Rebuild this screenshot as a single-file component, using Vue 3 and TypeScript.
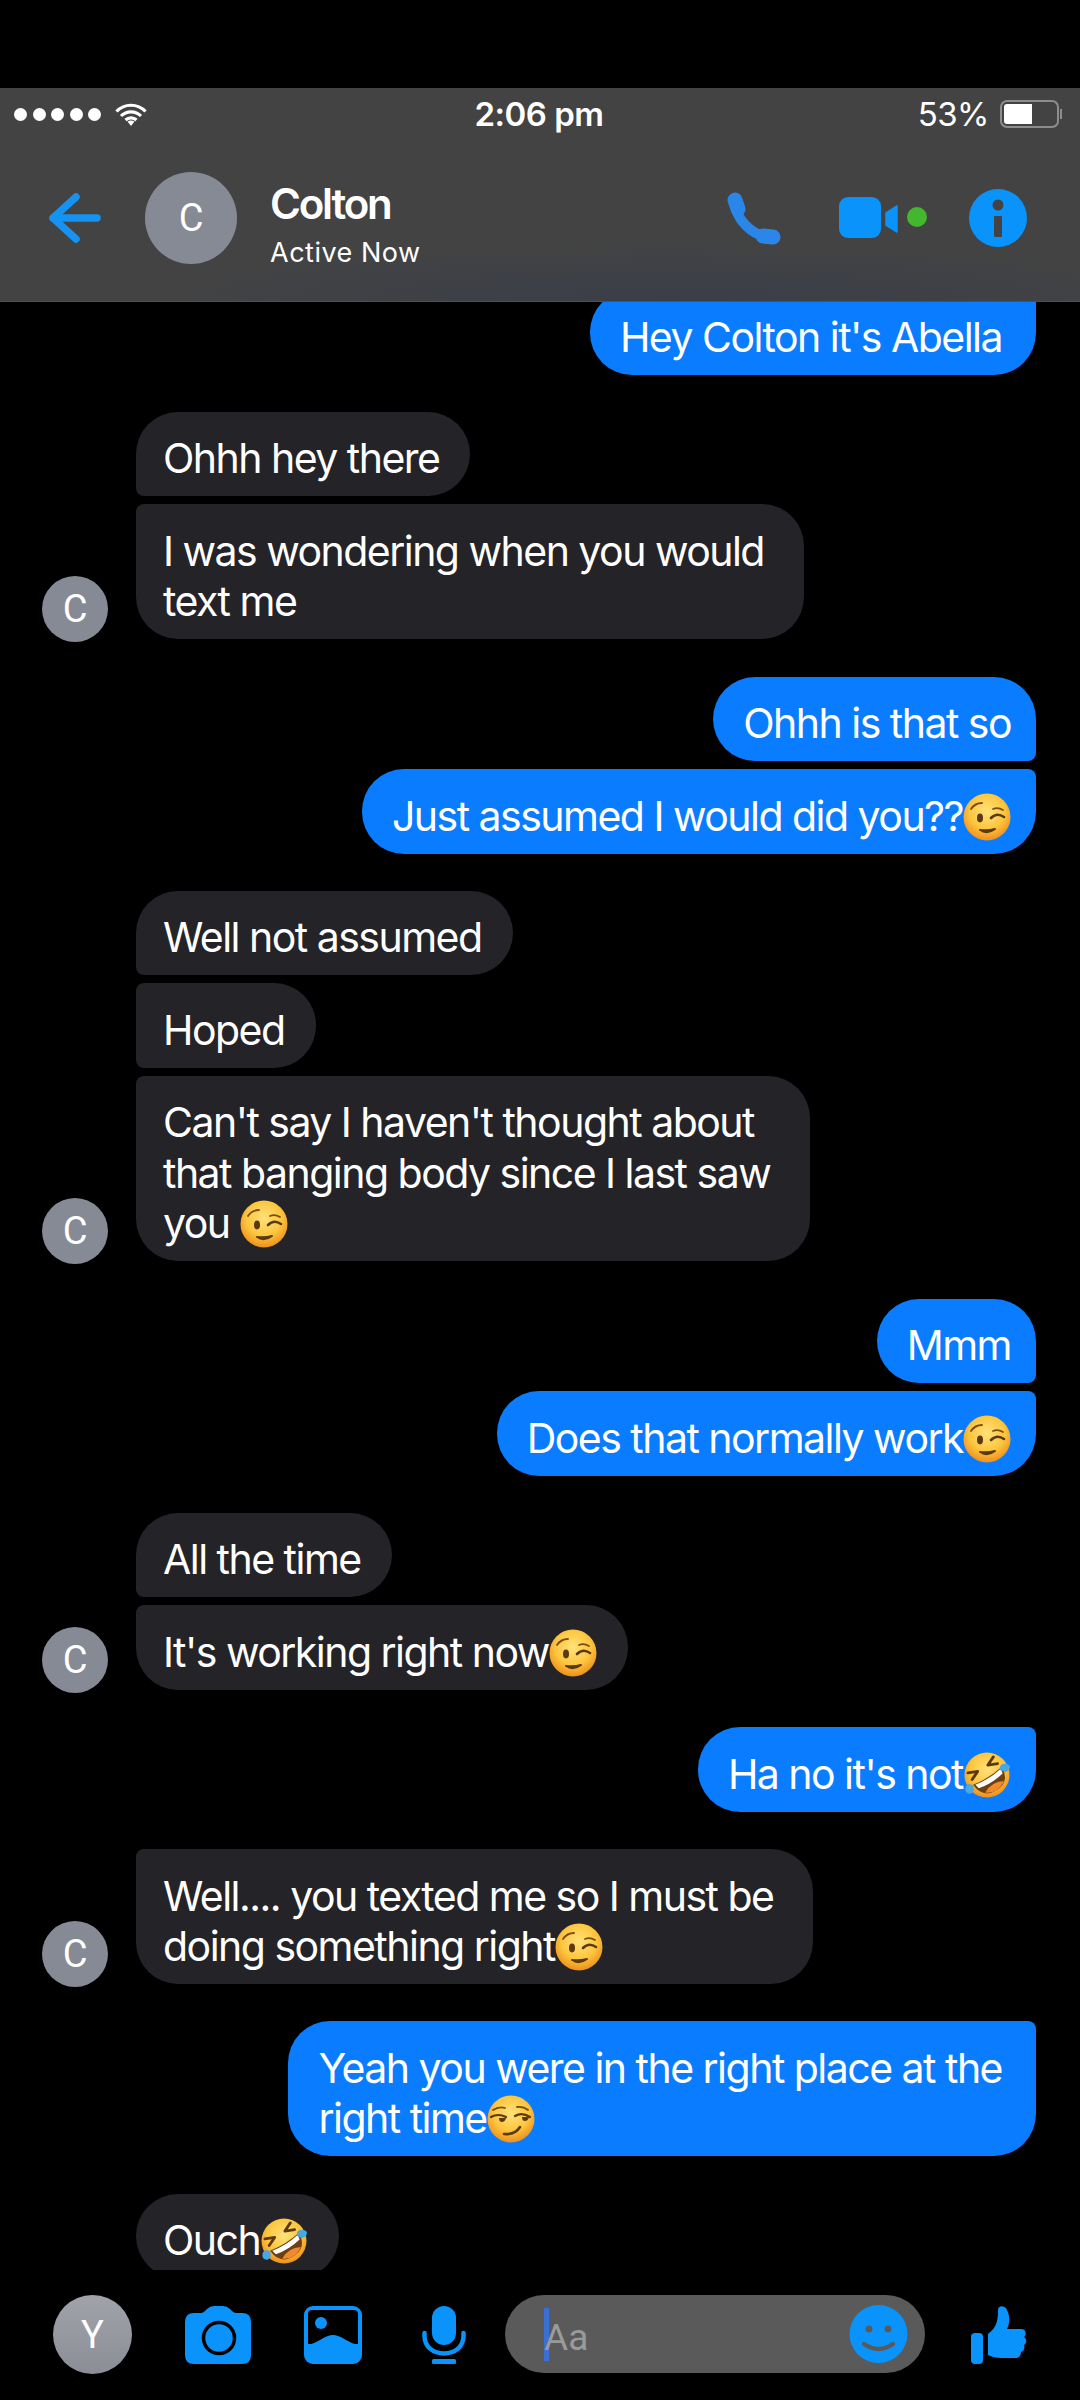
<script setup lang="ts">
type Piece = string | { emoji: 'wink' | 'rofl' | 'smirk' }
interface Bubble {
  lines: Piece[][]
  shape: 'top' | 'middle' | 'bottom' | 'single'
}
interface Group {
  side: 'in' | 'out'
  avatar?: boolean
  bubbles: Bubble[]
}

const wink = { emoji: 'wink' as const }
const rofl = { emoji: 'rofl' as const }
const smirk = { emoji: 'smirk' as const }

const groups: Group[] = [
  { side: 'out', bubbles: [{ lines: [["Hey Colton it's Abella"]], shape: 'single' }] },
  {
    side: 'in',
    avatar: true,
    bubbles: [
      { lines: [['Ohhh hey there']], shape: 'top' },
      { lines: [['I was wondering when you would'], ['text me']], shape: 'bottom' },
    ],
  },
  {
    side: 'out',
    bubbles: [
      { lines: [['Ohhh is that so']], shape: 'top' },
      { lines: [['Just assumed I would did you??', wink]], shape: 'bottom' },
    ],
  },
  {
    side: 'in',
    avatar: true,
    bubbles: [
      { lines: [['Well not assumed']], shape: 'top' },
      { lines: [['Hoped']], shape: 'middle' },
      {
        lines: [["Can't say I haven't thought about"], ['that banging body since I last saw'], ['you ', wink]],
        shape: 'bottom',
      },
    ],
  },
  {
    side: 'out',
    bubbles: [
      { lines: [['Mmm']], shape: 'top' },
      { lines: [['Does that normally work', wink]], shape: 'bottom' },
    ],
  },
  {
    side: 'in',
    avatar: true,
    bubbles: [
      { lines: [['All the time']], shape: 'top' },
      { lines: [["It's working right now", wink]], shape: 'bottom' },
    ],
  },
  { side: 'out', bubbles: [{ lines: [["Ha no it's not", rofl]], shape: 'single' }] },
  {
    side: 'in',
    avatar: true,
    bubbles: [{ lines: [['Well.... you texted me so I must be'], ['doing something right', wink]], shape: 'bottom' }],
  },
  {
    side: 'out',
    bubbles: [{ lines: [['Yeah you were in the right place at the'], ['right time', smirk]], shape: 'single' }],
  },
  { side: 'in', bubbles: [{ lines: [['Ouch', rofl]], shape: 'single' }] },
]
</script>

<template>
  <div class="screen">
    <svg class="defs" width="0" height="0" aria-hidden="true">
      <defs>
        <radialGradient id="face" cx="50%" cy="38%" r="62%">
          <stop offset="0%" stop-color="#ffe27a" />
          <stop offset="60%" stop-color="#fdc63f" />
          <stop offset="100%" stop-color="#ee8f1c" />
        </radialGradient>
        <symbol id="wink" viewBox="0 0 48 48">
          <circle cx="24" cy="24" r="23.500" fill="url(#face)" />
          <ellipse cx="17" cy="25" rx="3" ry="4.400" fill="#5b3a12" />
          <path d="M8 16q4-6 11-6" fill="none" stroke="#7a4d12" stroke-width="1.800" stroke-linecap="round" />
          <path d="M28 25q6-6 13-1" fill="none" stroke="#5b3a12" stroke-width="2.600" stroke-linecap="round" />
          <path d="M30 16q5-2 10 1" fill="none" stroke="#7a4d12" stroke-width="1.800" stroke-linecap="round" />
          <path d="M17 37q7 5 15-1q-7 2-15 1z" fill="#5b3a12" stroke="#5b3a12" stroke-width="2" stroke-linejoin="round" />
        </symbol>
        <symbol id="smirk" viewBox="0 0 48 48">
          <circle cx="24" cy="24" r="23.500" fill="url(#face)" />
          <path d="M4 22q7-4 15 0M28 21q7-4 15 1" fill="none" stroke="#5b3a12" stroke-width="2.200" stroke-linecap="round" />
          <path d="M12 23h7q-1 4-4 4t-3-4zM35 22h7q-1 4-4 4t-3-4z" fill="#5b3a12" />
          <path d="M6 15q6-4 12-2M30 12q6-1 11 3" fill="none" stroke="#7a4d12" stroke-width="1.800" stroke-linecap="round" />
          <path d="M17 39q11 1 16-7" fill="none" stroke="#5b3a12" stroke-width="2.600" stroke-linecap="round" />
        </symbol>
        <symbol id="rofl" viewBox="0 0 48 48">
          <circle cx="24" cy="24" r="22.500" fill="url(#face)" />
          <g transform="rotate(-32 24 24)">
            <path d="M7 25q17 3 34 0q-1 17-17 17T7 25z" fill="#6e3f10" />
            <path d="M9 26q15 3 30 0l-1 5q-14 3-28 0z" fill="#fff" />
            <path d="M13 38q11-6 22 0q-5 4-11 4t-11-4z" fill="#f08a2c" />
            <path d="M9 12l9 4l-9 4M39 12l-9 4l9 4" fill="none" stroke="#5b3a12" stroke-width="2.800" stroke-linecap="round" stroke-linejoin="round" />
          </g>
          <path d="M3 41q-2-5 2-8l5 1q2 5-1 8q-3 2-6-1z" fill="#4aa8e0" />
          <path d="M47 15q0 5-5 6l-5-2q-1-5 3-6q4-1 7 2z" fill="#4aa8e0" />
        </symbol>
      </defs>
    </svg>

    <header class="chat-header">
      <div class="status-bar">
        <div class="signal">
          <i v-for="n in 5" :key="n"></i>
          <svg class="wifi" viewBox="0 0 32 23" width="32" height="23">
            <path d="M1.500 8.500a20 20 0 0 1 29 0M6 13a14 14 0 0 1 20 0M10.500 17a8 8 0 0 1 11 0" fill="none" stroke="#fff" stroke-width="3.200" />
            <path d="M12.500 18.500q3.500-2 7 0L16 23z" fill="#fff" />
          </svg>
        </div>
        <div class="clock">2:06 pm</div>
        <div class="power">
          <span>53%</span>
          <div class="battery"><div class="battery-fill"></div></div>
          <div class="battery-nub"></div>
        </div>
      </div>
      <div class="nav-row">
        <svg class="back" viewBox="0 0 53 50" width="53" height="50">
          <path d="M28 4L5 25l23 21M5 25h44" fill="none" stroke="#1693f0" stroke-width="7.500" stroke-linecap="round" stroke-linejoin="round" />
        </svg>
        <div class="avatar avatar-large">C</div>
        <div class="contact">
          <div class="contact-name">Colton</div>
          <div class="contact-state">Active Now</div>
        </div>
        <svg class="phone" viewBox="0 0 54 53" width="54" height="53">
          <path d="M8 10C8 27 26 45 44 45" fill="none" stroke="#2a86e8" stroke-width="10" />
          <path d="M8 8l3 9M36 44l10 1" fill="none" stroke="#2a86e8" stroke-width="15" stroke-linecap="round" />
        </svg>
        <svg class="video" viewBox="0 0 88 42" width="88" height="42">
          <rect x="0" y="0" width="42" height="41" rx="9" fill="#0a94fb" />
          <path d="M47 16l11-7v26l-11-7z" fill="#0a94fb" stroke="#0a94fb" stroke-width="1.500" stroke-linejoin="round" />
          <circle cx="78" cy="20" r="10" fill="#43b82e" />
        </svg>
        <svg class="info" viewBox="0 0 58 58" width="58" height="58">
          <circle cx="29" cy="29" r="29" fill="#0a94fb" />
          <circle cx="29" cy="16" r="5.500" fill="#434343" />
          <rect x="25" y="27" width="8" height="21" rx="1" fill="#434343" />
        </svg>
      </div>
    </header>

    <main class="thread">
      <div class="thread-inner">
        <section v-for="(group, g) in groups" :key="g" class="group" :class="group.side">
          <div v-for="(bubble, b) in group.bubbles" :key="b" class="row">
            <div
              v-if="group.side === 'in'"
              class="avatar avatar-small"
              :class="{ hidden: !group.avatar || b !== group.bubbles.length - 1 }"
            >C</div>
            <div class="bubble" :class="[bubble.shape, { multi: bubble.lines.length > 1 }]">
              <div v-for="(line, l) in bubble.lines" :key="l" class="line">
                <template v-for="(piece, p) in line" :key="p">
                  <template v-if="typeof piece === 'string'">{{ piece }}</template>
                  <svg v-else class="emoji" width="48" height="48" role="img" :aria-label="piece.emoji">
                    <use :href="'#' + piece.emoji" />
                  </svg>
                </template>
              </div>
            </div>
          </div>
        </section>
      </div>
    </main>

    <footer class="composer">
      <div class="avatar avatar-me">Y</div>
      <svg class="camera" viewBox="0 0 66 58" width="66" height="58">
        <path d="M9 7h7q2 0 4-2l2-2q3-3 7-3h9q4 0 7 3l2 2q2 2 4 2h6q9 0 9 9v33q0 9-9 9H9q-9 0-9-9V16q0-9 9-9z" fill="#0a94fb" />
        <circle cx="34" cy="32" r="15.500" fill="#0a94fb" stroke="#000" stroke-width="3.500" />
      </svg>
      <svg class="gallery" viewBox="0 0 58 58" width="58" height="58">
        <rect width="58" height="58" rx="9" fill="#0a94fb" />
        <path d="M4 38V8q0-4 4-4h42q4 0 4 4v30z" fill="#000" />
        <circle cx="17" cy="17" r="6" fill="#0a94fb" />
        <path d="M4 39q5-1 12-5q8-5 13-5t13 5q7 4 12 5v6H4z" fill="#0a94fb" />
      </svg>
      <svg class="mic" viewBox="0 0 44 58" width="44" height="58">
        <rect x="10" y="0" width="24" height="39" rx="12" fill="#0a94fb" />
        <path d="M2.500 27v3c0 11 9 17.500 19.500 17.500s19.500-6.500 19.500-17.500v-3" fill="none" stroke="#0a94fb" stroke-width="4.500" stroke-linecap="round" />
        <rect x="10" y="53" width="24" height="5" rx="1.500" fill="#0a94fb" />
      </svg>
      <div class="input">
        <div class="caret"></div>
        <span class="placeholder">Aa</span>
        <svg class="smile" viewBox="0 0 59 58" width="59" height="58">
          <circle cx="29.500" cy="29" r="29" fill="#0a94fb" />
          <circle cx="20" cy="24" r="3.500" fill="#5a5a5a" />
          <circle cx="39" cy="24" r="3.500" fill="#5a5a5a" />
          <path d="M15 39q14.500 10 29 0" fill="none" stroke="#5a5a5a" stroke-width="4.500" stroke-linecap="round" />
        </svg>
      </div>
      <svg class="thumb" viewBox="0 0 57 58" width="57" height="58">
        <rect x="0" y="27" width="12" height="31" rx="4" fill="#0a94fb" />
        <path d="M17 28c5-4 8-8 9-13c1-4 1-8 1-11c0-5 7-5 9 0c3 6 3 13 0 19h14c5 0 6 5 3 8c3 2 3 6 0 8c1 3 0 6-3 7c0 4-2 6-6 6H31c-6 0-10-1-14-3z" fill="#0a94fb" />
      </svg>
    </footer>
  </div>
</template>

<style>
html,
body {
  margin: 0;
  background: #000;
}
</style>

<style scoped>
.screen {
  width: 1080px;
  height: 2400px;
  display: flex;
  flex-direction: column;
  padding-top: 88px;
  box-sizing: border-box;
  background: #000;
  color: #fff;
  font-family: Inter, "Liberation Sans", sans-serif;
  overflow: hidden;
}

.defs {
  position: absolute;
}

.chat-header {
  height: 214px;
  flex: none;
  box-sizing: border-box;
  background:
    radial-gradient(ellipse 560px 60px at 62% 100%, #3a3e48, rgba(58, 62, 72, 0) 100%),
    #434343;
  border-bottom: 1px solid #505050;
  display: flex;
  flex-direction: column;
}

.status-bar {
  height: 52px;
  padding: 0 18px 0 14px;
  display: grid;
  grid-template-columns: 1fr auto 1fr;
  align-items: center;
  font-size: 33px;
  letter-spacing: -0.5px;
}

.signal {
  display: flex;
  align-items: center;
  gap: 5.500px;
}

.signal i {
  width: 13px;
  height: 13px;
  border-radius: 50%;
  background: #fff;
}

.wifi {
  margin-left: 8px;
}

.clock {
  font-weight: 600;
  margin-left: 2px;
}

.power {
  display: flex;
  align-items: center;
  justify-content: flex-end;
}

.battery {
  width: 59px;
  height: 28px;
  margin-left: 11px;
  box-sizing: border-box;
  border: 2px solid #8d8d8d;
  border-radius: 7px;
  padding: 2px;
}

.battery-fill {
  width: 28px;
  height: 100%;
  background: #fff;
  border-radius: 3px 0 0 3px;
}

.battery-nub {
  width: 2px;
  height: 10px;
  background: #8d8d8d;
  margin-left: 1px;
}

.nav-row {
  flex: 1;
  display: flex;
  align-items: center;
  padding: 0 53px 5px 48px;
}

.avatar {
  flex: none;
  border-radius: 50%;
  background: #868a95;
  display: flex;
  align-items: center;
  justify-content: center;
  font-family: Roboto, sans-serif;
}

.avatar-large {
  width: 92px;
  height: 92px;
  margin-left: 44px;
  font-size: 38px;
}

.contact {
  margin-left: 33px;
  padding-top: 16px;
  flex: 1;
}

.contact-name {
  font-size: 42px;
  line-height: 46px;
  font-weight: 600;
  letter-spacing: -2.200px;
}

.contact-state {
  font-size: 27px;
  line-height: 36px;
  margin-top: 8px;
  letter-spacing: 0.500px;
}

.video {
  margin-left: 58px;
}

.info {
  margin-left: 42px;
}

.thread {
  height: 1968px;
  flex: none;
  overflow: hidden;
}

.thread-inner {
  margin-top: -12px;
  padding: 0 44px 0 42px;
  display: flex;
  flex-direction: column;
  gap: 37.300px;
}

.group {
  display: flex;
  flex-direction: column;
  gap: 8px;
}

.group.out {
  align-items: flex-end;
}

.row {
  display: flex;
  align-items: flex-end;
}

.avatar-small {
  width: 66px;
  height: 66px;
  margin-right: 28px;
  margin-bottom: -3px;
  font-size: 38px;
}

.avatar-small.hidden {
  visibility: hidden;
}

.bubble {
  padding: 21.500px 31px 12.500px 27px;
  font-size: 41px;
  line-height: 50.500px;
  letter-spacing: -1.520px;
  border-radius: 42px;
  background: #242328;
  white-space: pre;
}

.bubble.multi {
  padding-right: 40px;
}

.out .bubble {
  background: #0a7cff;
  padding-left: 30px;
  padding-right: 25px;
}

.out .bubble.multi,
.group:first-child .bubble {
  padding-right: 34px;
}

.in .bubble.top {
  border-bottom-left-radius: 8px;
}

.in .bubble.middle {
  border-top-left-radius: 8px;
  border-bottom-left-radius: 8px;
}

.in .bubble.bottom {
  border-top-left-radius: 8px;
}

.out .bubble.top {
  border-bottom-right-radius: 8px;
}

.out .bubble.bottom {
  border-top-right-radius: 8px;
}

.out .bubble.single {
  border-top-right-radius: 8px;
}

.emoji {
  vertical-align: -10px;
}

.composer {
  flex: 1;
  display: flex;
  align-items: flex-start;
  padding: 25px 0 0 53px;
}

.avatar-me {
  width: 79px;
  height: 79px;
  font-size: 38px;
  background: linear-gradient(#a0a3aa, #8b8e96);
}

.camera,
.gallery,
.mic,
.thumb {
  margin-top: 11px;
  flex: none;
}

.camera {
  margin-left: 53px;
}

.gallery {
  margin-left: 53px;
}

.mic {
  margin-left: 60px;
}

.input {
  width: 420px;
  height: 78px;
  margin-left: 39px;
  border-radius: 39px;
  background: #5a5a5a;
  display: flex;
  align-items: center;
  padding: 0 17px 0 39px;
  box-sizing: border-box;
}

.caret {
  width: 5px;
  height: 53px;
  background: #3a6fd8;
  margin-right: -5px;
}

.placeholder {
  flex: 1;
  font-family: Roboto, sans-serif;
  font-size: 37px;
  color: #9a9a9a;
  padding-top: 6px;
}

.thumb {
  margin-left: 46px;
}
</style>
